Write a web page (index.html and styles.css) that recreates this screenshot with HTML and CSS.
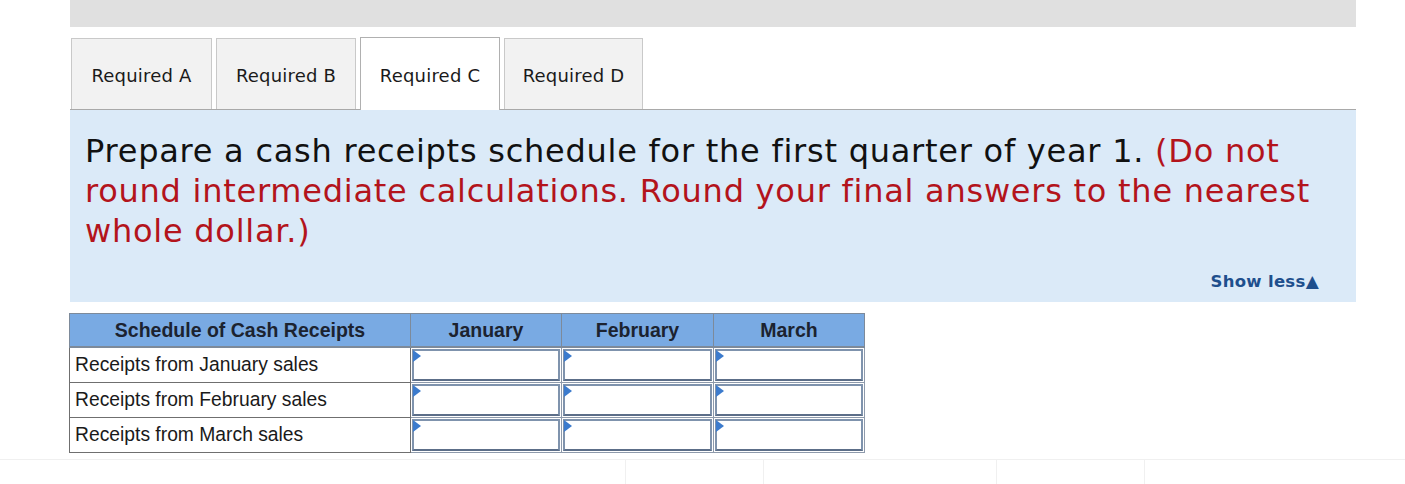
FILE: index.html
```html
<!DOCTYPE html>
<html>
<head>
<meta charset="utf-8">
<link rel="stylesheet" href="styles.css">
</head>
<body>
<div class="page">
  <div class="topbar"></div>
  <div class="tabs">
    <div class="tab">Required A</div>
    <div class="tab">Required B</div>
    <div class="tab active">Required C</div>
    <div class="tab">Required D</div>
  </div>
  <div class="panel">
    <p class="question">Prepare a cash receipts schedule for the first quarter of year 1. <span class="hint">(Do not round intermediate calculations. Round your final answers to the nearest whole dollar.)</span></p>
    <div class="showless">Show less<span class="tri">&#9650;</span></div>
  </div>
  <table class="sched">
    <colgroup>
      <col class="c1"><col class="c2"><col class="c3"><col class="c4">
    </colgroup>
    <thead>
      <tr><th>Schedule of Cash Receipts</th><th>January</th><th>February</th><th>March</th></tr>
    </thead>
    <tbody>
      <tr><td class="label">Receipts from January sales</td><td class="inp"><div class="box"></div></td><td class="inp"><div class="box"></div></td><td class="inp"><div class="box"></div></td></tr>
      <tr><td class="label">Receipts from February sales</td><td class="inp"><div class="box"></div></td><td class="inp"><div class="box"></div></td><td class="inp"><div class="box"></div></td></tr>
      <tr><td class="label">Receipts from March sales</td><td class="inp"><div class="box"></div></td><td class="inp"><div class="box"></div></td><td class="inp"><div class="box"></div></td></tr>
    </tbody>
  </table>
</div>
<div class="footer">
  <div class="fcell w1"></div>
  <div class="fcell w2"></div>
  <div class="fcell w3"></div>
  <div class="fcell w4"></div>
  <div class="fcell w5"></div>
</div>
</body>
</html>
```
FILE: styles.css
```css
html, body {
  margin: 0;
  padding: 0;
  background: #ffffff;
}
body {
  font-family: "DejaVu Sans", Verdana, sans-serif;
  color: #000;
}
.page {
  width: 1286px;
  margin-left: 70px;
}
.topbar {
  height: 27px;
  background: #e0e0e0;
}
.tabs {
  display: flex;
  gap: 4px;
  margin-top: 11px;
  padding-left: 1px;
}
.tab {
  width: 139px;
  height: 71px;
  box-sizing: border-box;
  border: 1px solid #c9c9c9;
  border-bottom: none;
  background: #f2f2f2;
  display: flex;
  align-items: center;
  justify-content: center;
  padding-top: 2px;
  font-size: 18px;
  letter-spacing: 0.2px;
  color: #1a1a1a;
}
.tab:nth-child(1) { width: 141px; }
.tab:nth-child(2) { width: 140px; }
.tab:nth-child(3) { width: 140px; }
.tab.active {
  background: #ffffff;
  border-color: #b0b0b0;
  height: 73px;
  margin-top: -1px;
  margin-bottom: -1px;
  position: relative;
  z-index: 1;
}
.panel {
  background: #dbeaf8;
  border-top: 1px solid #a9a9a9;
  height: 193px;
  box-sizing: border-box;
  padding: 21px 15px 0 15px;
  position: relative;
}
.question {
  margin: 0;
  font-size: 32px;
  line-height: 40px;
  color: #111;
  letter-spacing: 0.75px;
}
.hint {
  color: #b3141c;
}
.showless {
  position: absolute;
  right: 37px;
  bottom: 11px;
  font-size: 16.5px;
  font-weight: bold;
  letter-spacing: 0.3px;
  color: #1e4f8d;
}
.tri {
  font-size: 17px;
  margin-left: 0;
}
.sched {
  margin-top: 11px;
  margin-left: -1px;
  border-collapse: collapse;
  font-family: "Liberation Sans", Arial, sans-serif;
  border: 1px solid #6a6a6a;
}
col.c1 { width: 341px; }
col.c2 { width: 151px; }
col.c3 { width: 152px; }
col.c4 { width: 151px; }
.sched th {
  background: #79aae3;
  height: 32px;
  padding: 0;
  font-size: 19.5px;
  font-weight: bold;
  color: #1c2330;
  border: 1px solid #7d8a9a;
  border-bottom: 2px solid #7d8a9a;
}
.sched td {
  height: 33px;
  padding: 0;
  border: 1px solid #6f6f6f;
}
.sched td.label {
  font-size: 19.3px;
  line-height: 22px;
  padding-left: 5px;
  color: #1a1a1a;
}
.sched td.inp {
  padding: 1px 1px 0 1px;
  vertical-align: top;
  border-color: #8e9aab;
}
.box {
  height: 28px;
  border: 2px solid #7f93ad;
  border-bottom-color: #5c6e88;
  background: #fff;
  position: relative;
}
.box::before {
  content: "";
  position: absolute;
  left: -1px;
  top: -1px;
  border-left: 8px solid #3c7bcd;
  border-top: 6px solid transparent;
  border-bottom: 6px solid transparent;
}
.footer {
  margin-top: 6px;
  border-top: 1px solid #f0f0f0;
  height: 26px;
  display: flex;
}
.fcell {
  height: 26px;
  border-right: 1px solid #f0f0f0;
}
.w1 { width: 625px; }
.w2 { width: 137px; }
.w3 { width: 232px; }
.w4 { width: 147px; }
.w5 { width: 0; border-right: none; }
```
